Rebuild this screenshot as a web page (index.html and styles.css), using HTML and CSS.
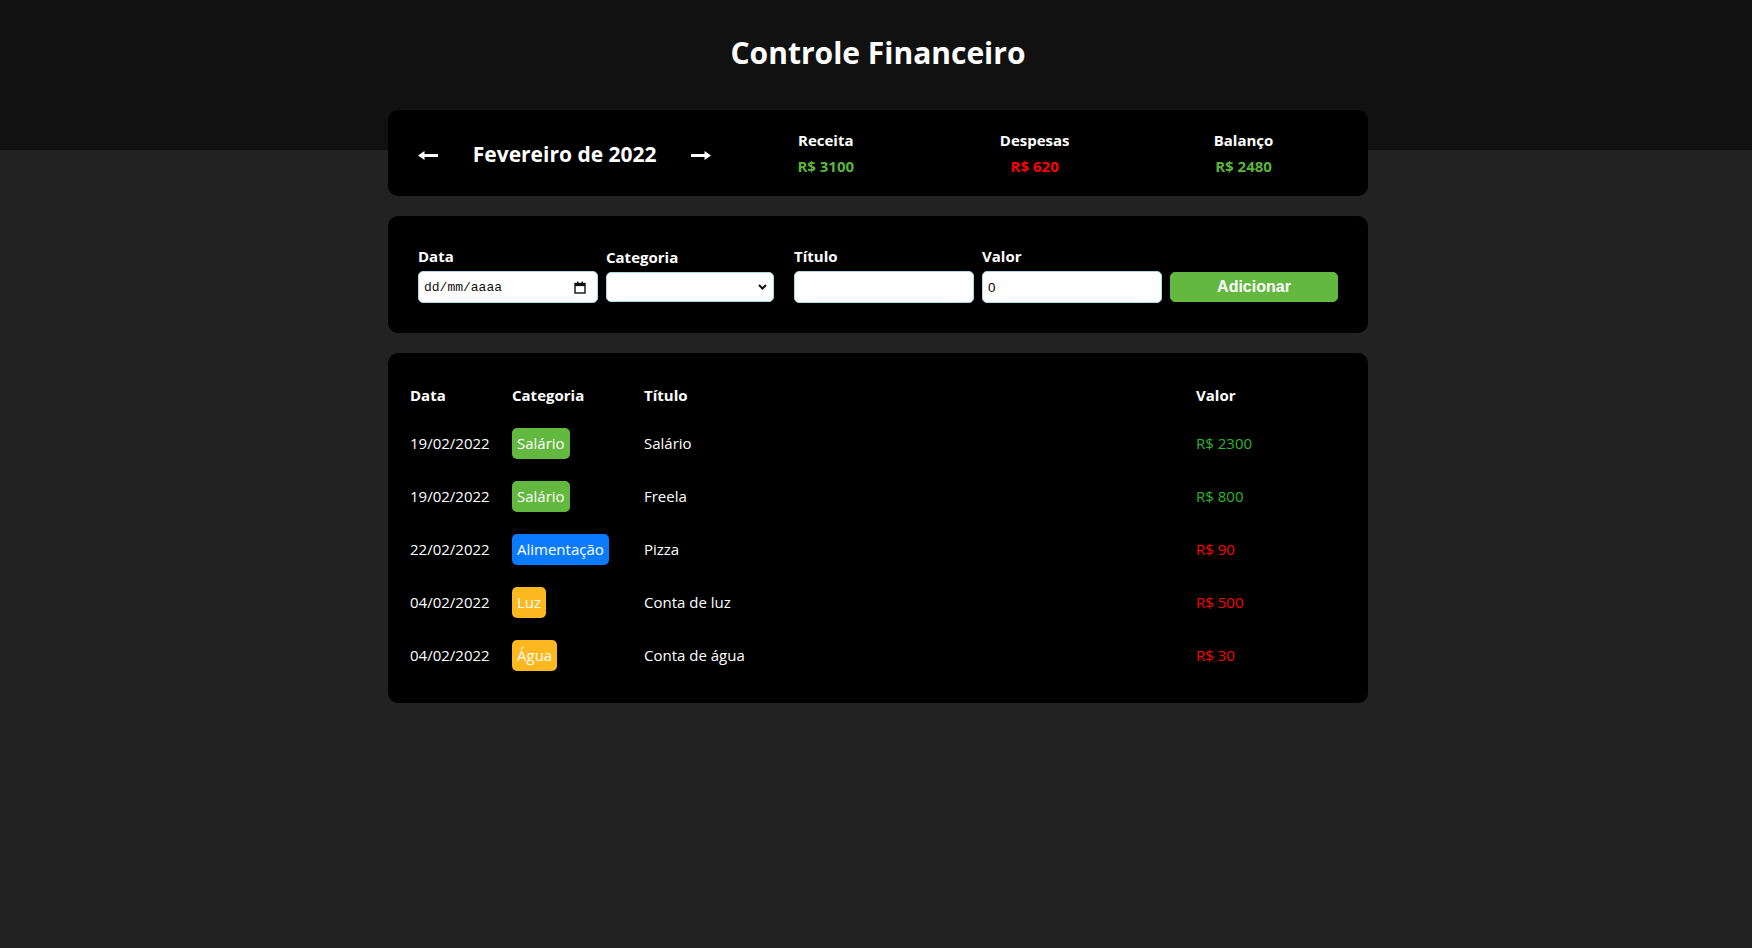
FILE: index.html
```html
<!DOCTYPE html>
<html lang="pt-BR">
<head>
<meta charset="utf-8">
<title>Controle Financeiro</title>
<link rel="stylesheet" href="styles.css">
</head>
<body>
<header class="header">
  <h1 class="header-title">Controle Financeiro</h1>
</header>
<main class="body">
  <section class="card info-area">
    <div class="month-area">
      <div class="month-arrow">
        <svg width="20" height="11" viewBox="0 0 20 11"><path d="M0 5.5 L6.5 1 L6.5 4 L20 4 L20 7 L6.5 7 L6.5 10 Z" fill="#fff"/></svg>
      </div>
      <div class="month-title">Fevereiro de 2022</div>
      <div class="month-arrow">
        <svg width="20" height="11" viewBox="0 0 20 11"><path d="M20 5.5 L13.5 1 L13.5 4 L0 4 L0 7 L13.5 7 L13.5 10 Z" fill="#fff"/></svg>
      </div>
    </div>
    <div class="resume-area">
      <div class="resume-item">
        <div class="resume-title">Receita</div>
        <div class="resume-info green">R$ 3100</div>
      </div>
      <div class="resume-item">
        <div class="resume-title">Despesas</div>
        <div class="resume-info red">R$ 620</div>
      </div>
      <div class="resume-item">
        <div class="resume-title">Balanço</div>
        <div class="resume-info green">R$ 2480</div>
      </div>
    </div>
  </section>

  <section class="card input-area">
    <label class="input-label">
      <div class="input-title">Data</div>
      <div class="field date-field">
        <span class="date-text">dd/mm/aaaa</span>
        <svg class="cal-icon" width="12" height="13" viewBox="0 0 12 13"><rect x="1" y="2.5" width="10" height="9.5" fill="none" stroke="#111" stroke-width="1.4"/><rect x="1" y="2.5" width="10" height="2.6" fill="#111"/><rect x="3" y="0.5" width="1.4" height="2.5" fill="#111"/><rect x="7.6" y="0.5" width="1.4" height="2.5" fill="#111"/></svg>
      </div>
    </label>
    <label class="input-label">
      <div class="input-title">Categoria</div>
      <div class="select-wrap">
        <select class="select"><option></option><option>Alimentação</option><option>Aluguel</option><option>Salário</option></select>
        <svg class="chevron" width="9" height="6" viewBox="0 0 9 6"><path d="M1 1 L4.5 4.5 L8 1" fill="none" stroke="#111" stroke-width="2"/></svg>
      </div>
    </label>
    <label class="input-label">
      <div class="input-title">Título</div>
      <input class="field" type="text">
    </label>
    <label class="input-label">
      <div class="input-title">Valor</div>
      <input class="field" type="number" value="0">
    </label>
    <div class="input-label">
      <div class="input-title">&nbsp;</div>
      <button class="button" type="button">Adicionar</button>
    </div>
  </section>

  <section class="card table-area">
    <table class="table">
      <thead>
        <tr>
          <th class="col-date">Data</th>
          <th class="col-cat">Categoria</th>
          <th>Título</th>
          <th class="col-value">Valor</th>
        </tr>
      </thead>
      <tbody>
        <tr>
          <td>19/02/2022</td>
          <td><span class="category cat-green">Salário</span></td>
          <td>Salário</td>
          <td class="value-green">R$ 2300</td>
        </tr>
        <tr>
          <td>19/02/2022</td>
          <td><span class="category cat-green">Salário</span></td>
          <td>Freela</td>
          <td class="value-green">R$ 800</td>
        </tr>
        <tr>
          <td>22/02/2022</td>
          <td><span class="category cat-blue">Alimentação</span></td>
          <td>Pizza</td>
          <td class="value-red">R$ 90</td>
        </tr>
        <tr>
          <td>04/02/2022</td>
          <td><span class="category cat-yellow">Luz</span></td>
          <td>Conta de luz</td>
          <td class="value-red">R$ 500</td>
        </tr>
        <tr>
          <td>04/02/2022</td>
          <td><span class="category cat-yellow">Água</span></td>
          <td>Conta de água</td>
          <td class="value-red">R$ 30</td>
        </tr>
      </tbody>
    </table>
  </section>
</main>
</body>
</html>
```
FILE: styles.css
```css
* { box-sizing: content-box; }
html, body { margin: 0; padding: 0; }
body {
  background: #222222;
  color: #ffffff;
  font-family: "Open Sans", "Noto Sans", sans-serif;
  font-size: 15px;
  line-height: 21px;
  padding-left: 4px;
}
.header {
  height: 150px;
  margin-left: -4px;
  padding-left: 4px;
  background: #111111;
  text-align: center;
}
.header-title {
  margin: 0;
  padding-top: 33px;
  font-size: 30px;
  line-height: 40px;
  font-weight: 700;
  color: #fff;
}
.body {
  width: 980px;
  margin: 0 auto 50px;
}
.card {
  background: #000;
  border-radius: 10px;
  padding: 20px;
  box-sizing: border-box;
}
.info-area {
  margin-top: -40px;
  display: flex;
  align-items: center;
}
.month-area {
  flex: 1;
  display: flex;
  align-items: center;
}
.month-arrow {
  width: 40px;
  padding-top: 4px;
  display: flex;
  justify-content: center;
  align-items: center;
  cursor: pointer;
}
.month-arrow svg { display: block; }
.month-title {
  flex: 1;
  text-align: center;
  font-weight: 700;
  font-size: 21px;
  line-height: 28px;
  padding-top: 2px;
}
.resume-area {
  flex: 2;
  display: flex;
}
.resume-item { flex: 1; }
.resume-title {
  text-align: center;
  font-weight: 700;
  font-size: 15px;
  line-height: 20px;
  margin-bottom: 6px;
}
.resume-info {
  text-align: center;
  font-weight: 700;
  font-size: 15px;
  line-height: 20px;
}
.green { color: #5cb53b; }
.red { color: #ff0000; }

.input-area {
  margin-top: 20px;
  display: flex;
  align-items: center;
}
.input-label {
  flex: 1;
  min-width: 0;
  margin: 10px;
  display: block;
}
.input-title {
  font-weight: 700;
  font-size: 15px;
  line-height: 20px;
  margin-bottom: 5px;
}
.field {
  display: block;
  width: 100%;
  height: 30px;
  padding: 0 5px;
  border: 1px solid #add8e6;
  border-radius: 5px;
  background: #fff;
  color: #000;
  font-family: "Liberation Sans", Arial, sans-serif;
  font-size: 13.33px;
  outline: none;
  margin: 0;
}
.date-field {
  display: flex;
  align-items: center;
  justify-content: space-between;
}
.date-text {
  font-family: "Liberation Mono", "DejaVu Sans Mono", monospace;
  font-size: 13px;
  color: #111;
}
.cal-icon { display: block; margin-right: 6px; }
.select-wrap { position: relative; }
.select {
  display: block;
  width: 100%;
  height: 30px;
  box-sizing: border-box;
  border: 1px solid #add8e6;
  border-radius: 5px;
  background: #fff;
  padding: 0 5px;
  -webkit-appearance: none;
  appearance: none;
  margin: 0;
}
.chevron {
  position: absolute;
  right: 7px;
  top: 12px;
  pointer-events: none;
}
.button {
  display: block;
  width: 100%;
  height: 30px;
  box-sizing: border-box;
  padding: 0 5px;
  border: 1px solid #63b83f;
  border-radius: 5px;
  background: #63b83f;
  color: #fff;
  font-family: "Liberation Sans", Arial, sans-serif;
  font-weight: 700;
  font-size: 16px;
  cursor: pointer;
  margin: 0;
}

.table-area {
  margin-top: 20px;
}
.table {
  width: 100%;
  border-spacing: 2px;
}
.table th {
  padding: 10px 0;
  text-align: left;
  font-weight: 700;
  font-size: 15px;
  line-height: 21px;
}
.col-date { width: 100px; }
.col-cat { width: 130px; }
.col-value { width: 150px; }
.table td {
  padding: 10px 0;
  font-size: 15px;
  line-height: 21px;
  vertical-align: middle;
}
.category {
  display: inline-block;
  padding: 5px;
  border-radius: 5px;
  color: #fff;
}
.cat-green { background: #63b83f; }
.cat-blue { background: #0a7bff; }
.cat-yellow { background: #fcb81e; }
.value-green { color: #2db52d; }
.value-red { color: #ff0000; }
```
